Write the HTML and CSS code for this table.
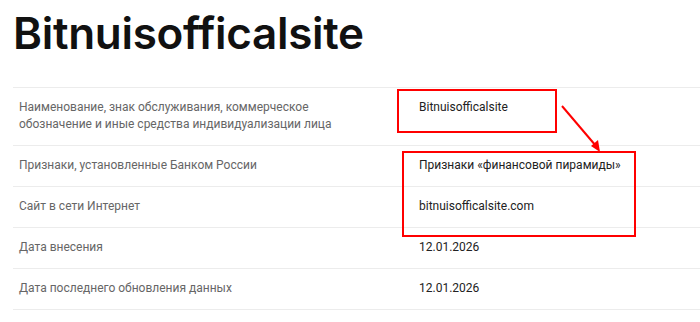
FILE: index.html
```html
<!DOCTYPE html>
<html lang="ru">
<head>
<meta charset="utf-8">
<link rel="stylesheet" href="styles.css">
</head>
<body>
<div class="page">
  <h1 class="title">Bitnuisofficalsite</h1>
  <div class="table">
    <div class="row">
      <div class="label">Наименование, знак обслуживания, коммерческое<br>обозначение и иные средства индивидуализации лица</div>
      <div class="value">Bitnuisofficalsite</div>
    </div>
    <div class="row">
      <div class="label">Признаки, установленные Банком России</div>
      <div class="value">Признаки «финансовой пирамиды»</div>
    </div>
    <div class="row">
      <div class="label">Сайт в сети Интернет</div>
      <div class="value">bitnuisofficalsite.com</div>
    </div>
    <div class="row">
      <div class="label">Дата внесения</div>
      <div class="value">12.01.2026</div>
    </div>
    <div class="row">
      <div class="label">Дата последнего обновления данных</div>
      <div class="value">12.01.2026</div>
    </div>
  </div>
  <div class="mark mark-name"></div>
  <div class="mark mark-signs"></div>
  <svg class="arrow" width="700" height="322" viewBox="0 0 700 322">
    <line x1="562" y1="106" x2="596" y2="146" stroke="#ff0000" stroke-width="2"/>
    <polygon points="600,152 591,146 598,140" fill="#ff0000"/>
  </svg>
</div>
</body>
</html>
```
FILE: styles.css
```css
html, body {
  margin: 0;
  padding: 0;
  background: #ffffff;
}
.page {
  position: relative;
  width: 700px;
  height: 322px;
  overflow: hidden;
  font-family: Inter, "Noto Sans", sans-serif;
}
.title {
  margin: 0;
  padding: 6px 0 0 13px;
  height: 87px;
  box-sizing: border-box;
  font-size: 44px;
  font-weight: 600;
  letter-spacing: -0.3px;
  line-height: 54px;
  color: #111111;
}
.table {
  margin-left: 13px;
  border-top: 1px solid #ececec;
}
.row {
  display: flex;
  border-bottom: 1px solid #ececec;
}
.label, .value {
  box-sizing: border-box;
  padding: 11px 6px 12px;
  font-family: Roboto, "Noto Sans", sans-serif;
  font-size: 12px;
  line-height: 17px;
}
.label {
  width: 400px;
  color: #666666;
}
.value {
  flex: 1;
  color: #222222;
}
.mark {
  position: absolute;
  border: 2px solid #ff0000;
  box-sizing: border-box;
}
.mark-name {
  left: 397px;
  top: 89px;
  width: 160px;
  height: 44px;
}
.mark-signs {
  left: 402px;
  top: 151px;
  width: 234px;
  height: 86px;
}
.arrow {
  position: absolute;
  left: 0;
  top: 0;
  pointer-events: none;
}
```
